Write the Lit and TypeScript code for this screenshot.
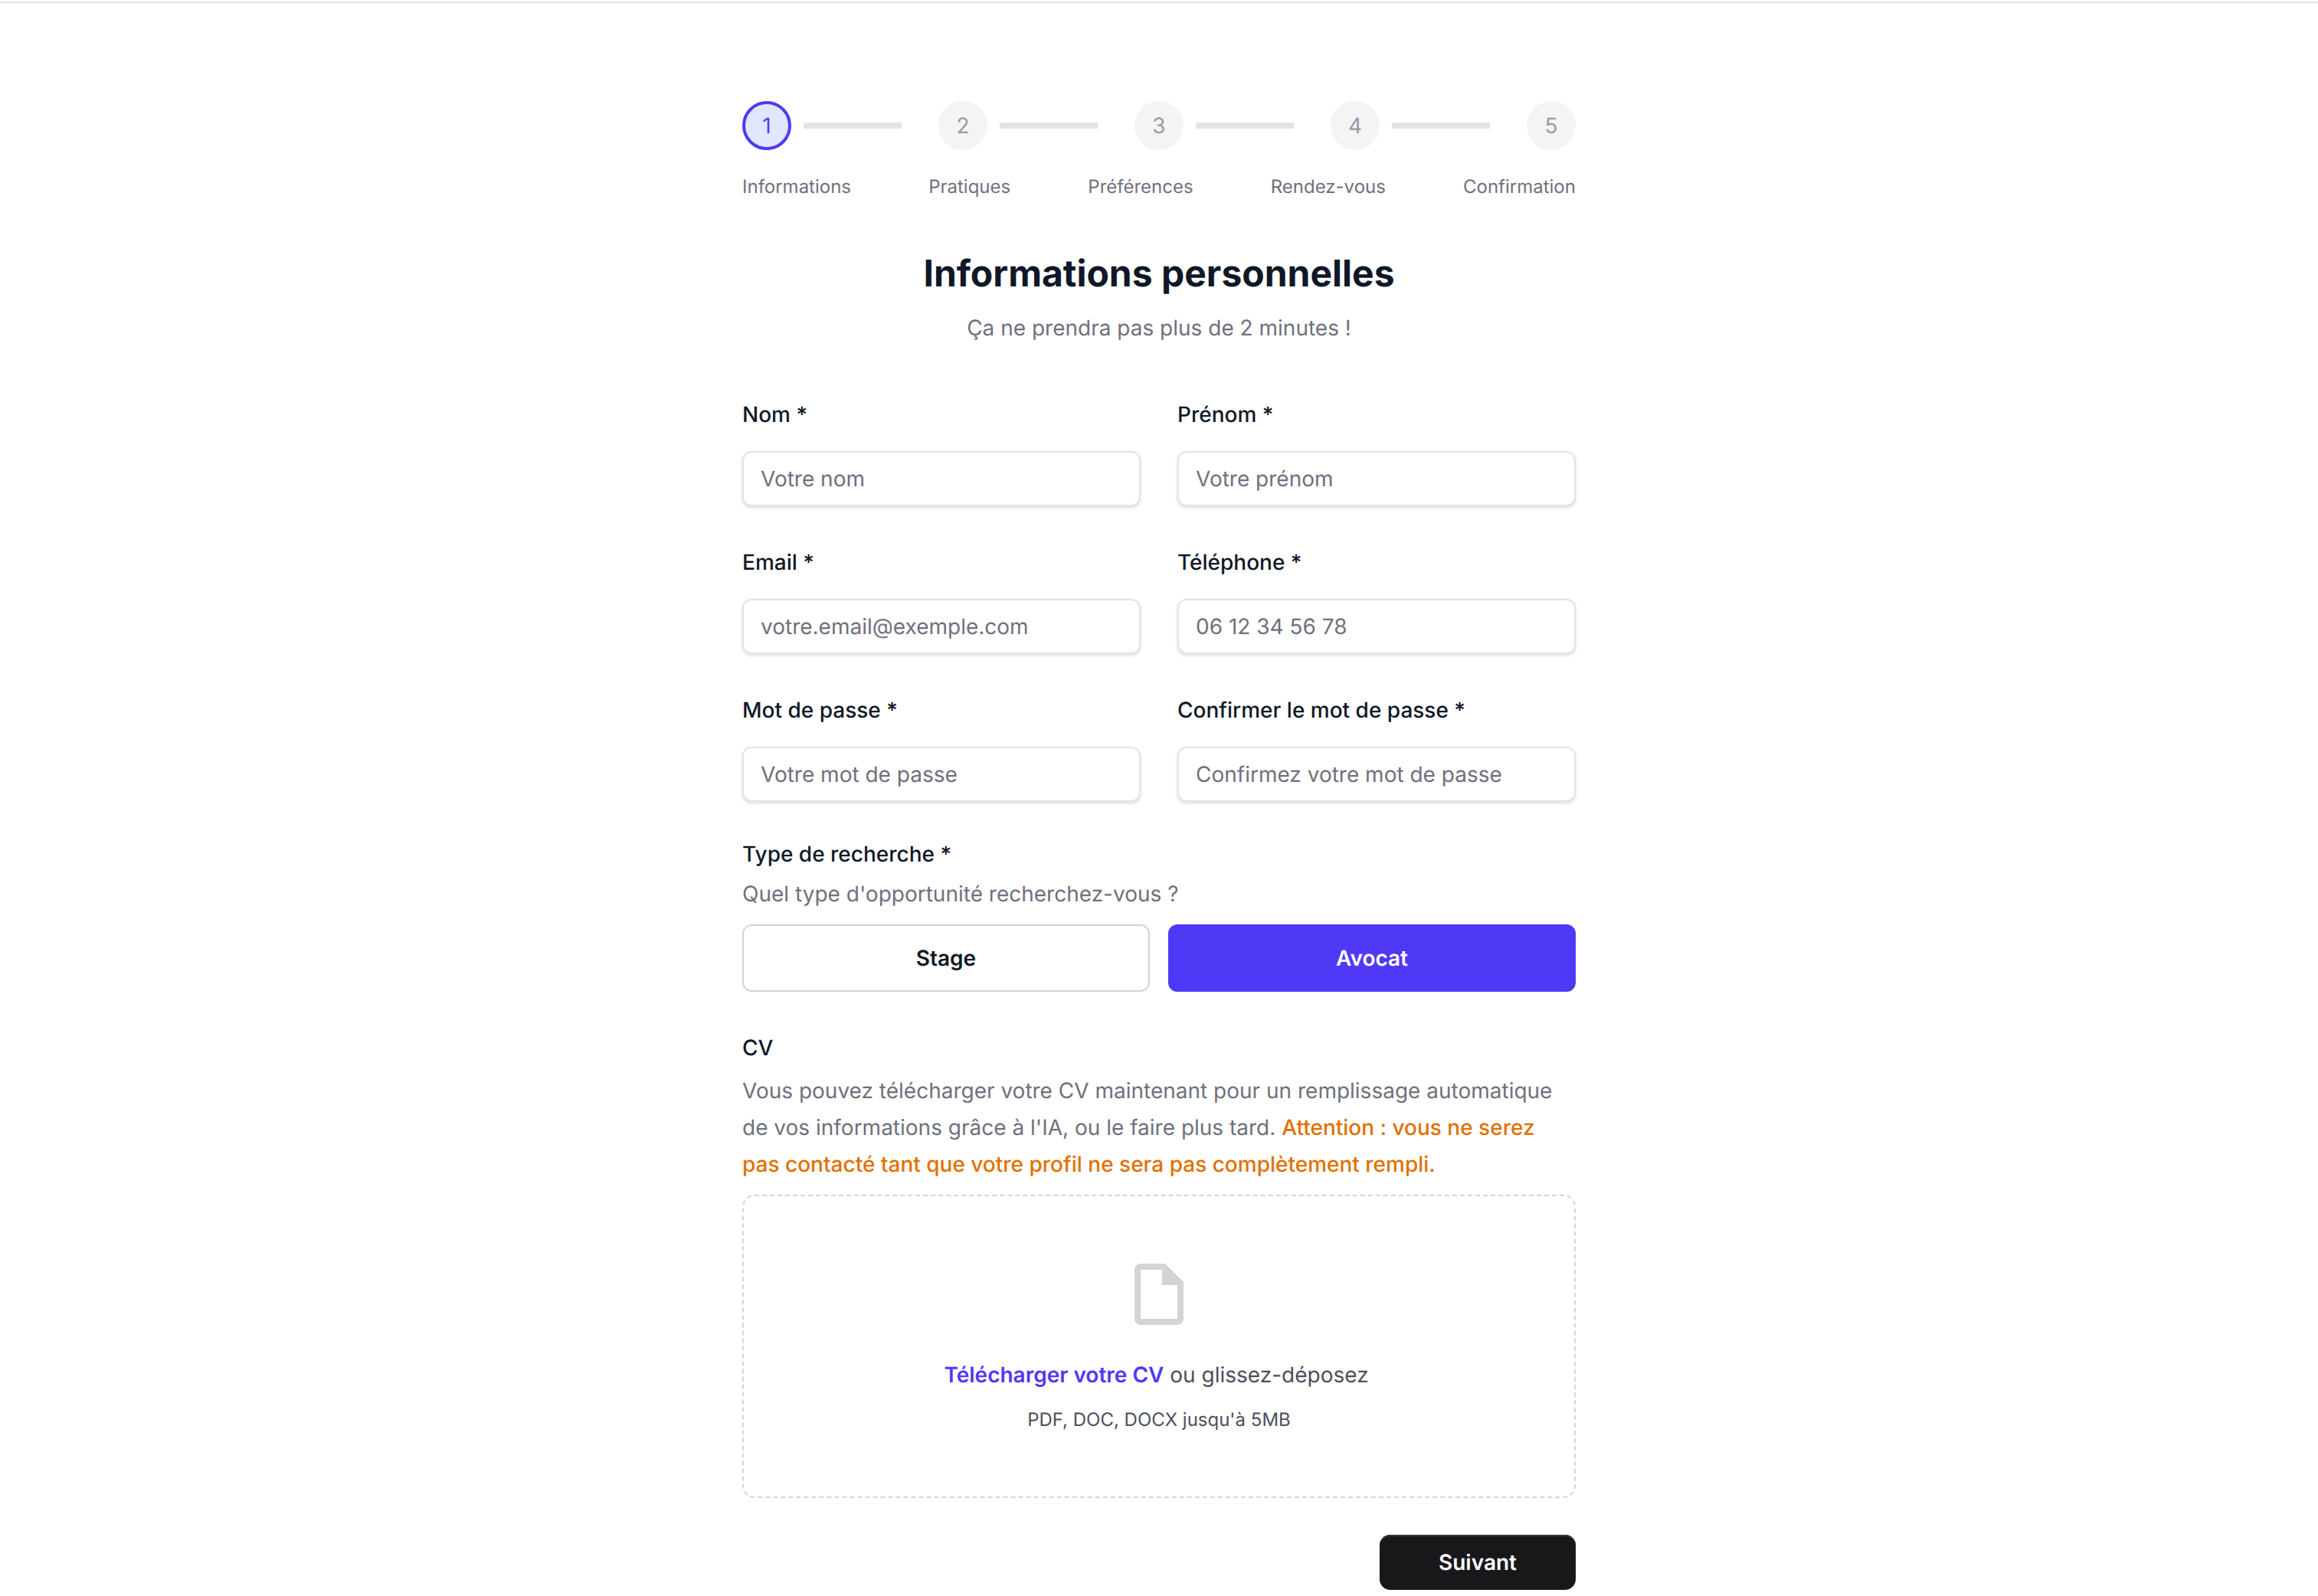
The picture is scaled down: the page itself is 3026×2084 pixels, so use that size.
import { LitElement, html, css } from "lit";
import { customElement } from "lit/decorators.js";

const STEPS = ["Informations", "Pratiques", "Préférences", "Rendez-vous", "Confirmation"];
const ROWS = [
  [["Nom *", "Votre nom"], ["Prénom *", "Votre prénom"]],
  [["Email *", "votre.email@exemple.com"], ["Téléphone *", "06 12 34 56 78"]],
  [["Mot de passe *", "Votre mot de passe"], ["Confirmer le mot de passe *", "Confirmez votre mot de passe"]],
];

@customElement("app-root")
export class AppRoot extends LitElement {
  static styles = css`
    :host { display: block; background: #fff; min-height: 2084px; font-family: Inter, "Liberation Sans", sans-serif; color: #101828; text-rendering: geometricPrecision; }
    * { box-sizing: border-box; }
    .page { margin-top: 2px; border-top: 2px solid #e4e4e7; padding-top: 128px; }
    .wrap { width: 1088px; margin: 0 auto; }
    .stepper { display: flex; align-items: center; height: 64px; }
    .circle { width: 64px; height: 64px; border-radius: 50%; background: #f4f4f5; color: #9a9aa5; font-size: 28px; display: flex; align-items: center; justify-content: center; flex: none; }
    .circle.on { background: #e0e7ff; color: #4f39f6; border: 4px solid #4f39f6; }
    .line { width: 128px; height: 8px; background: #e4e4e7; margin: 0 48px 0 16px; flex: none; }
    .labels { display: flex; justify-content: space-between; margin-top: 30px; font-size: 24px; line-height: 36px; color: #70707e; }
    h1 { margin: 63px 0 0; font-size: 48px; line-height: 64px; font-weight: 700; text-align: center; color: #101828; }
    .sub { margin: 19px 0 0; font-size: 28px; line-height: 40px; color: #70707e; text-align: center; }
    .grid { display: grid; grid-template-columns: 520px 520px; column-gap: 48px; row-gap: 53px; margin-top: 73px; }
    label, .lab { display: block; font-size: 28px; line-height: 40px; font-weight: 500; color: #101828; }
    input { display: block; width: 100%; height: 72px; margin-top: 28px; padding: 0 22px; border: 2px solid #e4e4e7; border-radius: 12px; background: #fff; box-shadow: 0 2px 4px rgba(0,0,0,.14); font: 400 28px Inter, sans-serif; color: #101828; outline: none; text-rendering: geometricPrecision; }
    input::placeholder { color: #70707e; opacity: 1; }
    .type { margin-top: 48px; }
    .help { margin: 12px 0 0; font-size: 28px; line-height: 40px; color: #70707e; }
    .choices { display: grid; grid-template-columns: 1fr 1fr; gap: 24px; margin-top: 20px; }
    .choices button { height: 88px; border-radius: 12px; border: 2px solid #d4d4d8; background: #fff; color: #101828; font: 600 28px Inter, sans-serif; text-rendering: geometricPrecision; }
    .choices button.on { background: #4f39f6; border-color: #4f39f6; color: #fff; }
    .cv { margin-top: 53px; }
    .para { margin: 12px 0 0; font-size: 28px; line-height: 48px; color: #70707e; }
    .warn { color: #e17100; font-weight: 500; }
    .drop { margin-top: 16px; height: 396px; border: 2px dashed #d4d4d8; border-radius: 16px; display: flex; flex-direction: column; align-items: center; padding-top: 88px; }
    .drop svg { display: block; width: 64px; height: 80px; }
    .drop-text { margin: 45px 0 0; padding-right: 7px; font-size: 28px; line-height: 40px; color: #4d4f5c; }
    .link { color: #4f39f6; font-weight: 600; }
    .drop-hint { margin: 21px 0 0; font-size: 24px; line-height: 36px; color: #4d4f5c; }
    .foot { display: flex; justify-content: flex-end; margin-top: 48px; }
    .next { width: 256px; height: 72px; border: none; border-radius: 14px; background: #18181b; box-shadow: inset 0 2px 0 #36363b; color: #fff; font: 600 28px Inter, sans-serif; text-rendering: geometricPrecision; }
  `;

  render() {
    return html`<div class="page"><div class="wrap">
      <div class="stepper">
        ${STEPS.map((_, i) => html`<div class="circle ${i === 0 ? "on" : ""}">${i + 1}</div>${i < 4 ? html`<div class="line"></div>` : ""}`)}
      </div>
      <div class="labels">${STEPS.map((s) => html`<span>${s}</span>`)}</div>
      <h1>Informations personnelles</h1>
      <p class="sub">Ça ne prendra pas plus de 2 minutes !</p>
      <div class="grid">
        ${ROWS.flat().map(([l, p]) => html`<div><label>${l}</label><input placeholder=${p} /></div>`)}
      </div>
      <div class="type">
        <div class="lab">Type de recherche *</div>
        <p class="help">Quel type d'opportunité recherchez-vous ?</p>
        <div class="choices"><button>Stage</button><button class="on">Avocat</button></div>
      </div>
      <div class="cv">
        <div class="lab">CV</div>
        <p class="para">Vous pouvez télécharger votre CV maintenant pour un remplissage automatique de vos informations grâce à l'IA, ou le faire plus tard. <span class="warn">Attention : vous ne serez pas contacté tant que votre profil ne sera pas complètement rempli.</span></p>
        <div class="drop">
          <svg viewBox="0 0 64 80"><path fill="#d4d4d8" fill-rule="evenodd" d="M8 0H40L64 24V72A8 8 0 0 1 56 80H8A8 8 0 0 1 0 72V8A8 8 0 0 1 8 0ZM8 8V72H56V28H36V8Z"/></svg>
          <p class="drop-text"><span class="link">Télécharger votre CV</span> ou glissez-déposez</p>
          <p class="drop-hint">PDF, DOC, DOCX jusqu'à 5MB</p>
        </div>
      </div>
      <div class="foot"><button class="next">Suivant</button></div>
    </div></div>`;
  }
}
